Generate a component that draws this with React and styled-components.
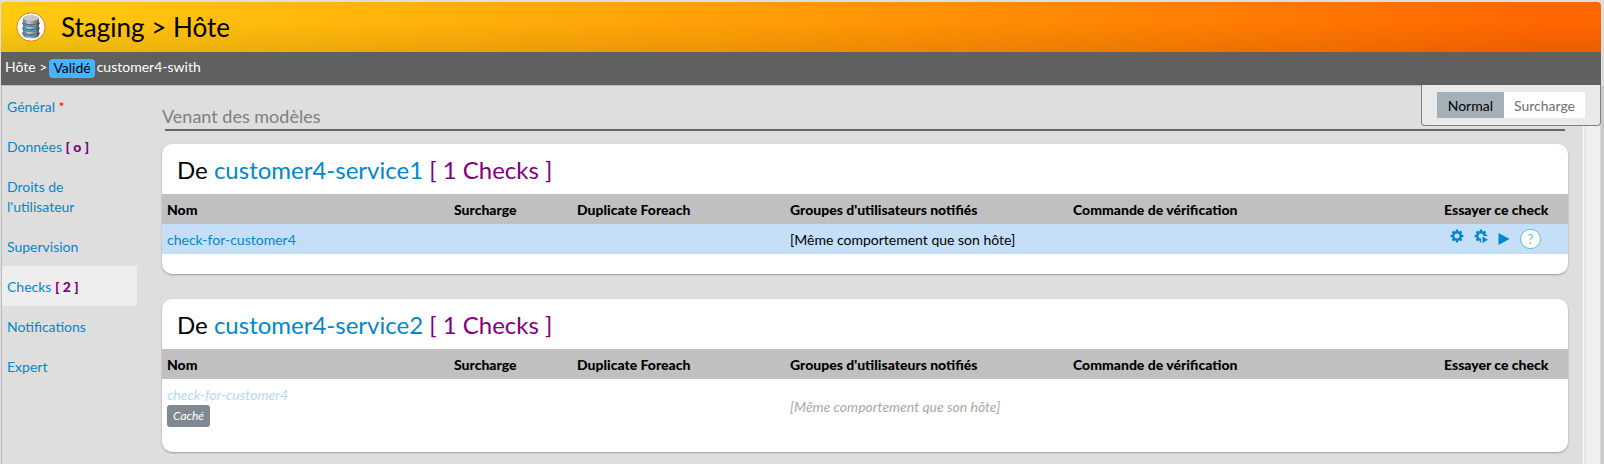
import React from "react";
import styled, { createGlobalStyle } from "styled-components";

const GlobalStyle = createGlobalStyle`
  * {
    box-sizing: border-box;
  }
  body {
    margin: 0;
    background-color: #dedede;
    color: #000;
    font-family: Lato, sans-serif;
    font-size: 14px;
    line-height: 20px;
  }
  a {
    color: #0088cc;
    text-decoration: none;
  }
`;

const Page = styled.div`
  display: flex;
  flex-direction: column;
  min-height: 100vh;
  padding: 2px 3px 0 1px;
  background-color: #dedede;
`;

const Header = styled.header`
  display: flex;
  align-items: center;
  height: 50px;
  padding-left: 15px;
  gap: 15px;
  border-radius: 4px 4px 0 0;
  background-image: linear-gradient(rgba(0, 0, 0, 0) 40%, rgba(0, 0, 0, 0.08)),
    linear-gradient(100deg, #ffcb10, #ff9a05 50%, #ff6600 96%);
`;

const Title = styled.h1`
  margin: 0;
  font-size: 26px;
  font-weight: normal;
  line-height: 32px;
`;

const Breadcrumb = styled.nav`
  display: flex;
  align-items: flex-start;
  gap: 2px;
  height: 33px;
  padding: 5px 4px;
  background-color: #606060;
  color: #fff;
`;

const Status = styled.span`
  margin-top: 2px;
  padding: 0 4px 2px;
  border-radius: 4px;
  background-color: #44b4ff;
  color: #000;
  line-height: 17px;
`;

const Body = styled.div`
  display: flex;
  flex: 1;
  border: solid #bcbcbc;
  border-width: 1px 0 0 1px;
`;

const Sidebar = styled.nav`
  flex: none;
  width: 135px;
`;

const Tab = styled.a`
  display: block;
  padding: 11px 45px 9px 5px;
  background-color: ${props => (props.$selected ? "#eeeeee" : "transparent")};
`;

const Required = styled.span`
  color: #ff0000;
`;

const Count = styled.span`
  color: #800080;
  font-weight: 900;
`;

const Content = styled.main`
  flex: 1;
  min-width: 0;
  padding: 18px 15px 10px 25px;
`;

const SectionTitle = styled.h2`
  margin: 0;
  color: #808080;
  font-size: 18px;
  font-weight: normal;
  line-height: 25px;
`;

const Rule = styled.hr`
  height: 2px;
  margin: 0 3px 13px;
  border: 0;
  background-color: #666;
`;

const Card = styled.section`
  margin-bottom: 25px;
  padding-bottom: 20px;
  border-radius: 10px;
  background-color: #fff;
  box-shadow: 0 1px 2px rgba(0, 0, 0, 0.3);

  &:last-child {
    margin-bottom: 0;
  }
`;

const CardTitle = styled.h3`
  margin: 0;
  padding: 6px 15px 4px;
  font-size: 24px;
  font-weight: normal;
  line-height: 40px;
`;

const Checks = styled.span`
  color: #800080;
`;

const Table = styled.table`
  width: 100%;
  border-collapse: collapse;
  table-layout: fixed;
`;

const Col = styled.col`
  width: ${props => props.$width};
`;

const Th = styled.th`
  padding: 6px 5px 4px;
  background-color: #c0c0c0;
  font-weight: 900;
  text-align: left;
  white-space: nowrap;
`;

const Row = styled.tr`
  background-color: ${props => (props.$hidden ? "#fff" : "#c5dff8")};
  color: ${props => (props.$hidden ? "#a8a8a8" : "#000")};
  font-style: ${props => (props.$hidden ? "italic" : "normal")};
`;

const Td = styled.td`
  height: 30px;
  padding: ${props => (props.$flush ? "0 5px" : "6px 5px 4px")};
  white-space: nowrap;
`;

const CheckLink = styled.a`
  display: block;
  opacity: ${props => (props.$hidden ? 0.3 : 1)};
`;

const Tag = styled.span`
  display: block;
  width: fit-content;
  margin-bottom: 1px;
  padding: 0 6px;
  border-radius: 3px;
  background-color: #808890;
  color: #fff;
  font-size: 12px;
  line-height: 22px;
`;

const Actions = styled.div`
  display: flex;
  align-items: center;
  gap: 10px;
  padding-left: 6px;
`;

const Action = styled.button`
  display: flex;
  padding: ${props => (props.$low ? "0" : "0 0 6px")};
  border: 0;
  background: none;
  color: #0088cc;
  cursor: pointer;
`;

const Help = styled.button`
  width: 21px;
  height: 20px;
  padding: 0;
  border: 1px solid #5bc0de;
  border-radius: 10px;
  background-color: #fff;
  color: #5bc0de;
  font: inherit;
  font-size: 13px;
  line-height: 18px;
`;

const Gutter = styled.div`
  flex: none;
  width: 18px;
  border-left: 1px solid #fafafa;
  border-right: 1px solid #d6d6d6;
  background-image: linear-gradient(90deg, #e2e2e2, #efefef 3px);
  box-shadow: 3px 0 0 #cacaca;
`;

const ModeBox = styled.div`
  position: absolute;
  top: 85px;
  right: 3px;
  display: flex;
  padding: 7px 15px;
  border: 1px solid #808080;
  border-top: 0;
  border-radius: 0 0 4px 4px;
  background-color: #e9e9e9;
`;

const Mode = styled.button`
  height: 26px;
  padding: ${props => (props.$selected ? "1px 11px 0" : "1px 10px 0")};
  border: 0;
  background-color: ${props => (props.$selected ? "#a3b0b8" : "#fff")};
  color: ${props => (props.$selected ? "#000" : "#707070")};
  font: inherit;
`;

const HostIcon = () => (
  <svg width="30" height="30" viewBox="0 0 30 30" aria-hidden="true">
    <defs>
      <linearGradient id="disk">
        <stop offset="0" stopColor="#777" />
        <stop offset="0.35" stopColor="#c4c4c4" />
        <stop offset="1" stopColor="#5e5e5e" />
      </linearGradient>
    </defs>
    <circle cx="15" cy="15" r="14.2" fill="#fff" stroke="#d4801c" />
    <path d="M7 6v17c0 4.500 16 4.500 16 0V6z" fill="url(#disk)" />
    <ellipse cx="15" cy="6" rx="8" ry="3" fill="#c8c8c8" />
    <path
      d="M7 10.500c1 4 15 4 16 0M7 15.500c1 4 15 4 16 0M7 20.500c1 4 15 4 16 0"
      fill="none"
      stroke="#555"
      strokeWidth="2.400"
    />
    <path
      d="M7.500 11c1 3.500 11 4 13 1.500M7.500 16c1 3.500 11 4 13 1.500M7.500 21c1 3.500 11 4 13 1.500"
      fill="none"
      stroke="#38aef0"
      strokeWidth="1.300"
    />
  </svg>
);

const teeth = [0, 45, 90, 135, 180, 225, 270, 315];

const GearIcon = ({ play }) => (
  <svg width="14" height="14" viewBox="0 0 14 14" aria-hidden="true">
    <circle cx="7" cy="7" r="3.700" fill="none" stroke="currentColor" strokeWidth="2.400" />
    {teeth.map(angle => (
      <path
        key={angle}
        d="M5.500 2.800L6 0.600h2l0.500 2.200z"
        fill="currentColor"
        transform={`rotate(${angle} 7 7)`}
      />
    ))}
    {play && (
      <>
        <path d="M7 7h7v7h-7z" fill="#c5dff8" />
        <path d="M8.500 7.500L14 10.800L8.500 14z" fill="currentColor" />
      </>
    )}
  </svg>
);

const PlayIcon = () => (
  <svg width="12" height="14" viewBox="0 0 12 14" aria-hidden="true">
    <path d="M0.500 1L11.500 7L0.500 13z" fill="currentColor" />
  </svg>
);

const columns = [
  { label: "Nom", width: "287px" },
  { label: "Surcharge", width: "123px" },
  { label: "Duplicate Foreach", width: "213px" },
  { label: "Groupes d'utilisateurs notifiés", width: "283px" },
  { label: "Commande de vérification", width: "auto" },
  { label: "Essayer ce check", width: "129px" }
];

const tabs = [
  { label: "Général", required: true },
  { label: "Données", count: "o" },
  { label: "Droits de l'utilisateur" },
  { label: "Supervision" },
  { label: "Checks", count: "2", selected: true },
  { label: "Notifications" },
  { label: "Expert" }
];

const services = [
  { name: "customer4-service1", hidden: false },
  { name: "customer4-service2", hidden: true }
];

const ServiceCard = ({ name, hidden }) => (
  <Card>
    <CardTitle>
      De <a href="#service">{name}</a> <Checks>[ 1 Checks ]</Checks>
    </CardTitle>
    <Table>
      <colgroup>
        {columns.map(column => (
          <Col key={column.label} $width={column.width} />
        ))}
      </colgroup>
      <thead>
        <tr>
          {columns.map(column => (
            <Th key={column.label} scope="col">
              {column.label}
            </Th>
          ))}
        </tr>
      </thead>
      <tbody>
        <Row $hidden={hidden}>
          <Td>
            <CheckLink href="#check" $hidden={hidden}>
              check-for-customer4
            </CheckLink>
            {hidden && <Tag>Caché</Tag>}
          </Td>
          <Td />
          <Td />
          <Td>[Même comportement que son hôte]</Td>
          <Td />
          <Td $flush>
            {!hidden && (
              <Actions>
                <Action aria-label="Configurer">
                  <GearIcon />
                </Action>
                <Action aria-label="Configurer et lancer">
                  <GearIcon play />
                </Action>
                <Action aria-label="Lancer" $low>
                  <PlayIcon />
                </Action>
                <Help>?</Help>
              </Actions>
            )}
          </Td>
        </Row>
      </tbody>
    </Table>
  </Card>
);

const App = () => (
  <>
    <GlobalStyle />
    <Page>
      <Header>
        <HostIcon />
        <Title>Staging &gt; Hôte</Title>
      </Header>
      <Breadcrumb>
        <span>Hôte &gt;</span>
        <Status>Validé</Status>
        <span>customer4-swith</span>
      </Breadcrumb>
      <Body>
        <Sidebar>
          {tabs.map(tab => (
            <Tab key={tab.label} href="#tab" $selected={tab.selected}>
              {tab.label} {tab.required && <Required>*</Required>}
              {tab.count && <Count>[&nbsp;{tab.count}&nbsp;]</Count>}
            </Tab>
          ))}
        </Sidebar>
        <Content>
          <SectionTitle>Venant des modèles</SectionTitle>
          <Rule />
          {services.map(service => (
            <ServiceCard key={service.name} {...service} />
          ))}
        </Content>
        <Gutter />
      </Body>
      <ModeBox>
        <Mode $selected>Normal</Mode>
        <Mode>Surcharge</Mode>
      </ModeBox>
    </Page>
  </>
);

export default App;
